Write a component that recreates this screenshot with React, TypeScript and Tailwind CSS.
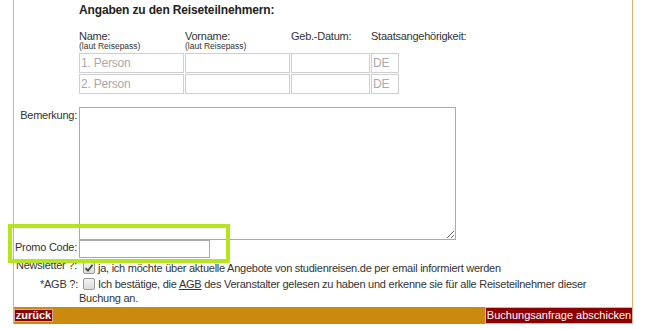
import React from "react";

const font = { fontFamily: '"Liberation Sans", Arial, sans-serif' };

const Field = ({ w, placeholder, value }: { w: string; placeholder?: string; value?: string }) => (
  <input
    className={`${w} h-[20px] border border-[#cfcfcf] px-[1px] text-[12px] tracking-[-0.2px] text-[#aaa] placeholder:text-[#aaa] outline-none`}
    placeholder={placeholder}
    defaultValue={value}
    style={font}
  />
);

const Check = ({ checked }: { checked?: boolean }) => (
  <span className="mt-[1px] flex h-[12px] w-[12px] shrink-0 items-center justify-center rounded-[2px] border border-[#9a9a9a] bg-gradient-to-b from-[#f4f4f4] to-[#dcdcdc]">
    {checked && (
      <svg width="10" height="10" viewBox="0 0 10 10">
        <path d="M1.5 5.2 L4 7.6 L8.6 1.8" fill="none" stroke="#444" strokeWidth="1.8" />
      </svg>
    )}
  </span>
);

export default function App() {
  return (
    <div className="relative h-[329px] w-[650px] overflow-hidden bg-white text-[#333]" style={font}>
      <div className="ml-[13px] w-[620px] border-x border-[#d9b66c]">
        <div className="grid grid-cols-[65px_1fr] text-[11px] tracking-[-0.25px]">
          {/* Reiseteilnehmer */}
          <div />
          <div className="pt-[3px]">
            <h3 className="text-[12px] font-bold leading-[14px] tracking-[-0.15px] text-[#222]">
              Angaben zu den Reiseteilnehmern:
            </h3>
            <div className="mt-[13px] grid grid-cols-[106px_106px_80px_auto] leading-[12px]">
              <div>
                <div>Name:</div>
                <div className="text-[8.5px] leading-[9px] tracking-normal">(laut Reisepass)</div>
              </div>
              <div>
                <div>Vorname:</div>
                <div className="text-[8.5px] leading-[9px] tracking-normal">(laut Reisepass)</div>
              </div>
              <div>Geb.-Datum:</div>
              <div>Staatsangehörigkeit:</div>
            </div>
            <div className="mt-[2px] flex flex-col gap-[1px]">
              {["1. Person", "2. Person"].map((p) => (
                <div key={p} className="grid grid-cols-[106px_106px_80px_auto]">
                  <Field w="w-[105px]" placeholder={p} />
                  <Field w="w-[105px]" />
                  <Field w="w-[79px]" />
                  <Field w="w-[28px]" value="DE" />
                </div>
              ))}
            </div>
          </div>

          {/* Bemerkung */}
          <div className="mt-[13px] whitespace-nowrap pr-[2px] pt-[1px] text-right leading-[14px]">Bemerkung:</div>
          <div className="mt-[13px]">
            <textarea className="block h-[133px] w-[377px] resize border border-[#aaa] outline-none" />
          </div>

          {/* Promo Code */}
          <div className="whitespace-nowrap pr-[2px] text-right leading-[14px]">Promo Code:</div>
          <div>
            <input className="block h-[18px] w-[131px] border border-[#aaa] outline-none" />
          </div>

          {/* Newsletter */}
          <div className="mt-[0px] whitespace-nowrap pr-[2px] text-right leading-[14px]">Newsletter ?:</div>
          <div className="mt-[3px] flex items-start gap-[3px] pl-[4px] leading-[14px]">
            <Check checked />
            <span>ja, ich möchte über aktuelle Angebote von studienreisen.de per email informiert werden</span>
          </div>

          {/* AGB */}
          <div className="mt-[2px] whitespace-nowrap pr-[1px] text-right leading-[14px]">*AGB ?:</div>
          <div className="mt-[2px] leading-[14px]">
            <div className="flex items-start gap-[3px] pl-[4px]">
              <Check />
              <span className="whitespace-nowrap">
                Ich bestätige, die <span className="underline">AGB</span> des Veranstalter gelesen zu haben und erkenne sie für alle Reiseteilnehmer dieser
              </span>
            </div>
            <div>Buchung an.</div>
          </div>
        </div>

        <div className="mt-[2px] flex h-[17px] items-center justify-between bg-[#c98a0e]">
          <button className="ml-[0px] h-[13px] w-[39px] border border-[#d7a7a7] bg-[#8c0000] text-[11px] font-bold leading-[11px] text-white">
            zurück
          </button>
          <button className="mr-[-1px] h-[17px] w-[148px] border border-[#d8b3a8] bg-[#8c0000] text-[11px] leading-[13px] text-white">
            Buchungsanfrage abschicken
          </button>
        </div>
      </div>

      {/* highlight annotation */}
      <div className="absolute left-[8px] top-[224px] h-[39px] w-[222px] border-[4px] border-[#b5e61d]" />
    </div>
  );
}
